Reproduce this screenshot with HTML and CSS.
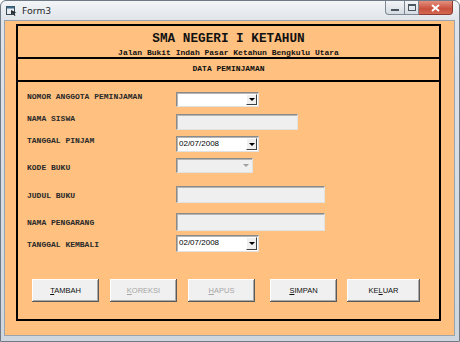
FILE: index.html
```html
<!DOCTYPE html>
<html lang="id">
<head>
    <meta charset="UTF-8">
    <title>Form3</title>
    <link rel="stylesheet" href="styles.css">
</head>
<body>
    <div class="window">
        <div class="titlebar">
            <svg class="app-icon" width="11" height="11" viewBox="0 0 11 11">
                <rect x="0.5" y="1.5" width="8" height="8" fill="#e8eef2" stroke="#3c4a55"/>
                <rect x="0.5" y="1.5" width="8" height="2" fill="#3c6a8a"/>
                <path d="M5 5 L10.5 7.5 L8 8 L9.5 10.5 L8.5 11 L7 8.5 L5 10 Z" fill="#2a2f33"/>
            </svg>
            <span class="caption">Form3</span>
            <div class="caption-buttons">
                <span class="cb cb-min"><i class="min-bar"></i></span>
                <span class="cb cb-max"><i class="max-box"></i></span>
                <span class="cb cb-close">
                    <svg width="9" height="8" viewBox="0 0 9 8">
                        <path d="M1 1 L8 7 M8 1 L1 7" stroke="#fff" stroke-width="2"/>
                    </svg>
                </span>
            </div>
        </div>
        <div class="client">
            <div class="panel">
                <div class="school">
                    <h1>SMA NEGERI I KETAHUN</h1>
                    <p>Jalan Bukit Indah Pasar Ketahun Bengkulu Utara</p>
                </div>
                <div class="section">DATA PEMINJAMAN</div>

                <div class="fields">
                    <div class="row row-1">
                        <label>NOMOR ANGGOTA PEMINJAMAN</label>
                        <div class="combo">
                            <span class="combo-text"></span>
                            <span class="arrow"></span>
                        </div>
                    </div>
                    <div class="row row-2">
                        <label>NAMA SISWA</label>
                        <div class="textbox textbox-short"></div>
                    </div>
                    <div class="row row-3">
                        <label>TANGGAL PINJAM</label>
                        <div class="combo">
                            <span class="combo-text">02/07/2008</span>
                            <span class="arrow"></span>
                        </div>
                    </div>
                    <div class="row row-4 low">
                        <label>KODE BUKU</label>
                        <div class="combo combo-off">
                            <span class="combo-text"></span>
                            <span class="arrow"></span>
                        </div>
                    </div>
                    <div class="row row-5 low">
                        <label>JUDUL BUKU</label>
                        <div class="textbox textbox-long"></div>
                    </div>
                    <div class="row row-6 low">
                        <label>NAMA PENGARANG</label>
                        <div class="textbox textbox-long"></div>
                    </div>
                    <div class="row row-7 low">
                        <label>TANGGAL KEMBALI</label>
                        <div class="combo">
                            <span class="combo-text">02/07/2008</span>
                            <span class="arrow"></span>
                        </div>
                    </div>
                </div>

                <div class="actions">
                    <button class="btn"><u>T</u>AMBAH</button>
                    <button class="btn" disabled><u>K</u>OREKSI</button>
                    <button class="btn" disabled><u>H</u>APUS</button>
                    <button class="btn btn-simpan"><u>S</u>IMPAN</button>
                    <button class="btn btn-keluar">KE<u>L</u>UAR</button>
                </div>
            </div>
        </div>
    </div>
</body>
</html>
```

FILE: styles.css
```css
body {
    margin: 0;
    background: #ffffff;
    font-family: "Liberation Sans", Arial, sans-serif;
}
.window {
    width: 460px;
    height: 342px;
    box-sizing: border-box;
    border: 1px solid #6f7a86;
    border-radius: 6px 6px 0 0;
    background: linear-gradient(#f3f5f7, #dfe4ea 20px, #cfd6de);
    display: flex;
    flex-direction: column;
}

/* title bar */
.titlebar {
    height: 19px;
    display: flex;
    align-items: center;
    padding-left: 5px;
}
.app-icon {
    margin-right: 5px;
}
.caption {
    font-family: "Noto Sans", "Open Sans", sans-serif;
    font-size: 9.5px;
    color: #1e1e1e;
}
.caption-buttons {
    margin-left: auto;
    margin-right: 6px;
    align-self: flex-start;
    display: flex;
}
.cb {
    height: 14px;
    box-sizing: border-box;
    border: 1px solid #7d8894;
    border-top: none;
    display: flex;
    align-items: center;
    justify-content: center;
    background: linear-gradient(#f2f4f6, #d6dce3);
}
.cb-min {
    width: 20px;
    border-radius: 0 0 0 4px;
}
.cb-max {
    width: 14px;
    border-left: none;
}
.cb-close {
    width: 34px;
    border-left: none;
    border-color: #8c3a2f;
    border-radius: 0 0 4px 0;
    background: linear-gradient(#e4907f, #c8503c 60%, #d46a52);
}
.min-bar {
    display: block;
    width: 8px;
    height: 2px;
    margin-top: 4px;
    background: #4a5560;
}
.max-box {
    display: block;
    width: 6px;
    height: 4px;
    border: 1px solid #4a5560;
    border-top-width: 2px;
}

/* client area */
.client {
    flex: 1;
    margin: 0 4px 5px 3px;
    padding: 3px 0 0 11px;
    background: #ffc080;
    border: 1px solid #9aa4ae;
}
.panel {
    width: 425px;
    height: 297px;
    box-sizing: border-box;
    border: 2px solid #000;
    font-family: "Liberation Mono", "Courier New", monospace;
    color: #111;
}
.school {
    height: 33px;
    box-sizing: border-box;
    padding-top: 6px;
    border-bottom: 2px solid #000;
    text-align: center;
}
.school h1 {
    margin: 0;
    font-size: 12.7px;
    line-height: 14px;
    font-weight: bold;
}
.school p {
    margin: 2px 0 0;
    font-size: 8px;
    line-height: 10px;
    font-weight: bold;
}
.section {
    height: 23px;
    box-sizing: border-box;
    padding-top: 5px;
    border-bottom: 2px solid #000;
    text-align: center;
    font-size: 8px;
    line-height: 10px;
    font-weight: bold;
}

/* form fields */
.fields {
    padding: 10px 0 0 9px;
}
.row {
    display: flex;
    align-items: flex-start;
}
.row label {
    width: 149px;
    font-size: 8px;
    line-height: 10px;
    font-weight: bold;
    color: #2a2a2a;
}
.row.low label {
    padding-top: 5px;
}
.row-2 { margin-top: 7px; }
.row-3 { margin-top: 6px; }
.row-4 { margin-top: 6px; }
.row-5 { margin-top: 13px; }
.row-6 { margin-top: 10px; }
.row-7 { margin-top: 4px; }
.row-7 label { padding-top: 6px; }

.textbox,
.combo {
    box-sizing: border-box;
    border: 1px solid;
    border-color: #8a8a8a #e2e2e2 #e2e2e2 #8a8a8a;
    box-shadow: inset 1px 1px #b4b4b4;
}
.textbox {
    height: 17px;
    background: #efefef;
}
.textbox-short { width: 122px; height: 16px; }
.textbox-long { width: 149px; }
.row-6 .textbox { height: 18px; }

.combo {
    width: 83px;
    height: 16px;
    display: flex;
    align-items: stretch;
    background: #fff;
    padding: 1px;
}
.row-1 .combo { height: 15px; }
.row-7 .combo { height: 17px; }
.combo-text {
    flex: 1;
    padding-left: 1px;
    font-family: "Liberation Sans", Arial, sans-serif;
    font-size: 8px;
    line-height: 12px;
    color: #000;
}
.arrow {
    width: 11px;
    box-sizing: border-box;
    background: #f0f0f0;
    border: 1px solid;
    border-color: #fff #404040 #404040 #fff;
    display: flex;
    align-items: center;
    justify-content: center;
}
.arrow::after {
    content: "";
    border-left: 3px solid transparent;
    border-right: 3px solid transparent;
    border-top: 3px solid #000;
}
.combo-off {
    width: 77px;
    height: 15px;
    background: #efefef;
}
.combo-off .arrow {
    border-color: #f0f0f0;
}
.combo-off .arrow::after {
    border-top-color: #a0a0a0;
}

/* buttons */
.actions {
    display: flex;
    gap: 11px;
    margin-top: 27px;
    padding-left: 14px;
}
.btn {
    width: 67px;
    height: 23px;
    padding: 0;
    border: none;
    background: #f0f0f0;
    box-shadow: inset -1px -1px #5a5a5a, inset 1px 1px #ffffff, inset -2px -2px #a8a8a8;
    font-family: "Liberation Sans", Arial, sans-serif;
    font-size: 7.5px;
    color: #111;
}
.btn:disabled {
    color: #a6a6a6;
}
.btn:disabled u {
    text-decoration-color: #a6a6a6;
}
.btn-simpan {
    margin-left: 4px;
}
.btn-keluar {
    width: 73px;
    margin-left: -1px;
}
```
